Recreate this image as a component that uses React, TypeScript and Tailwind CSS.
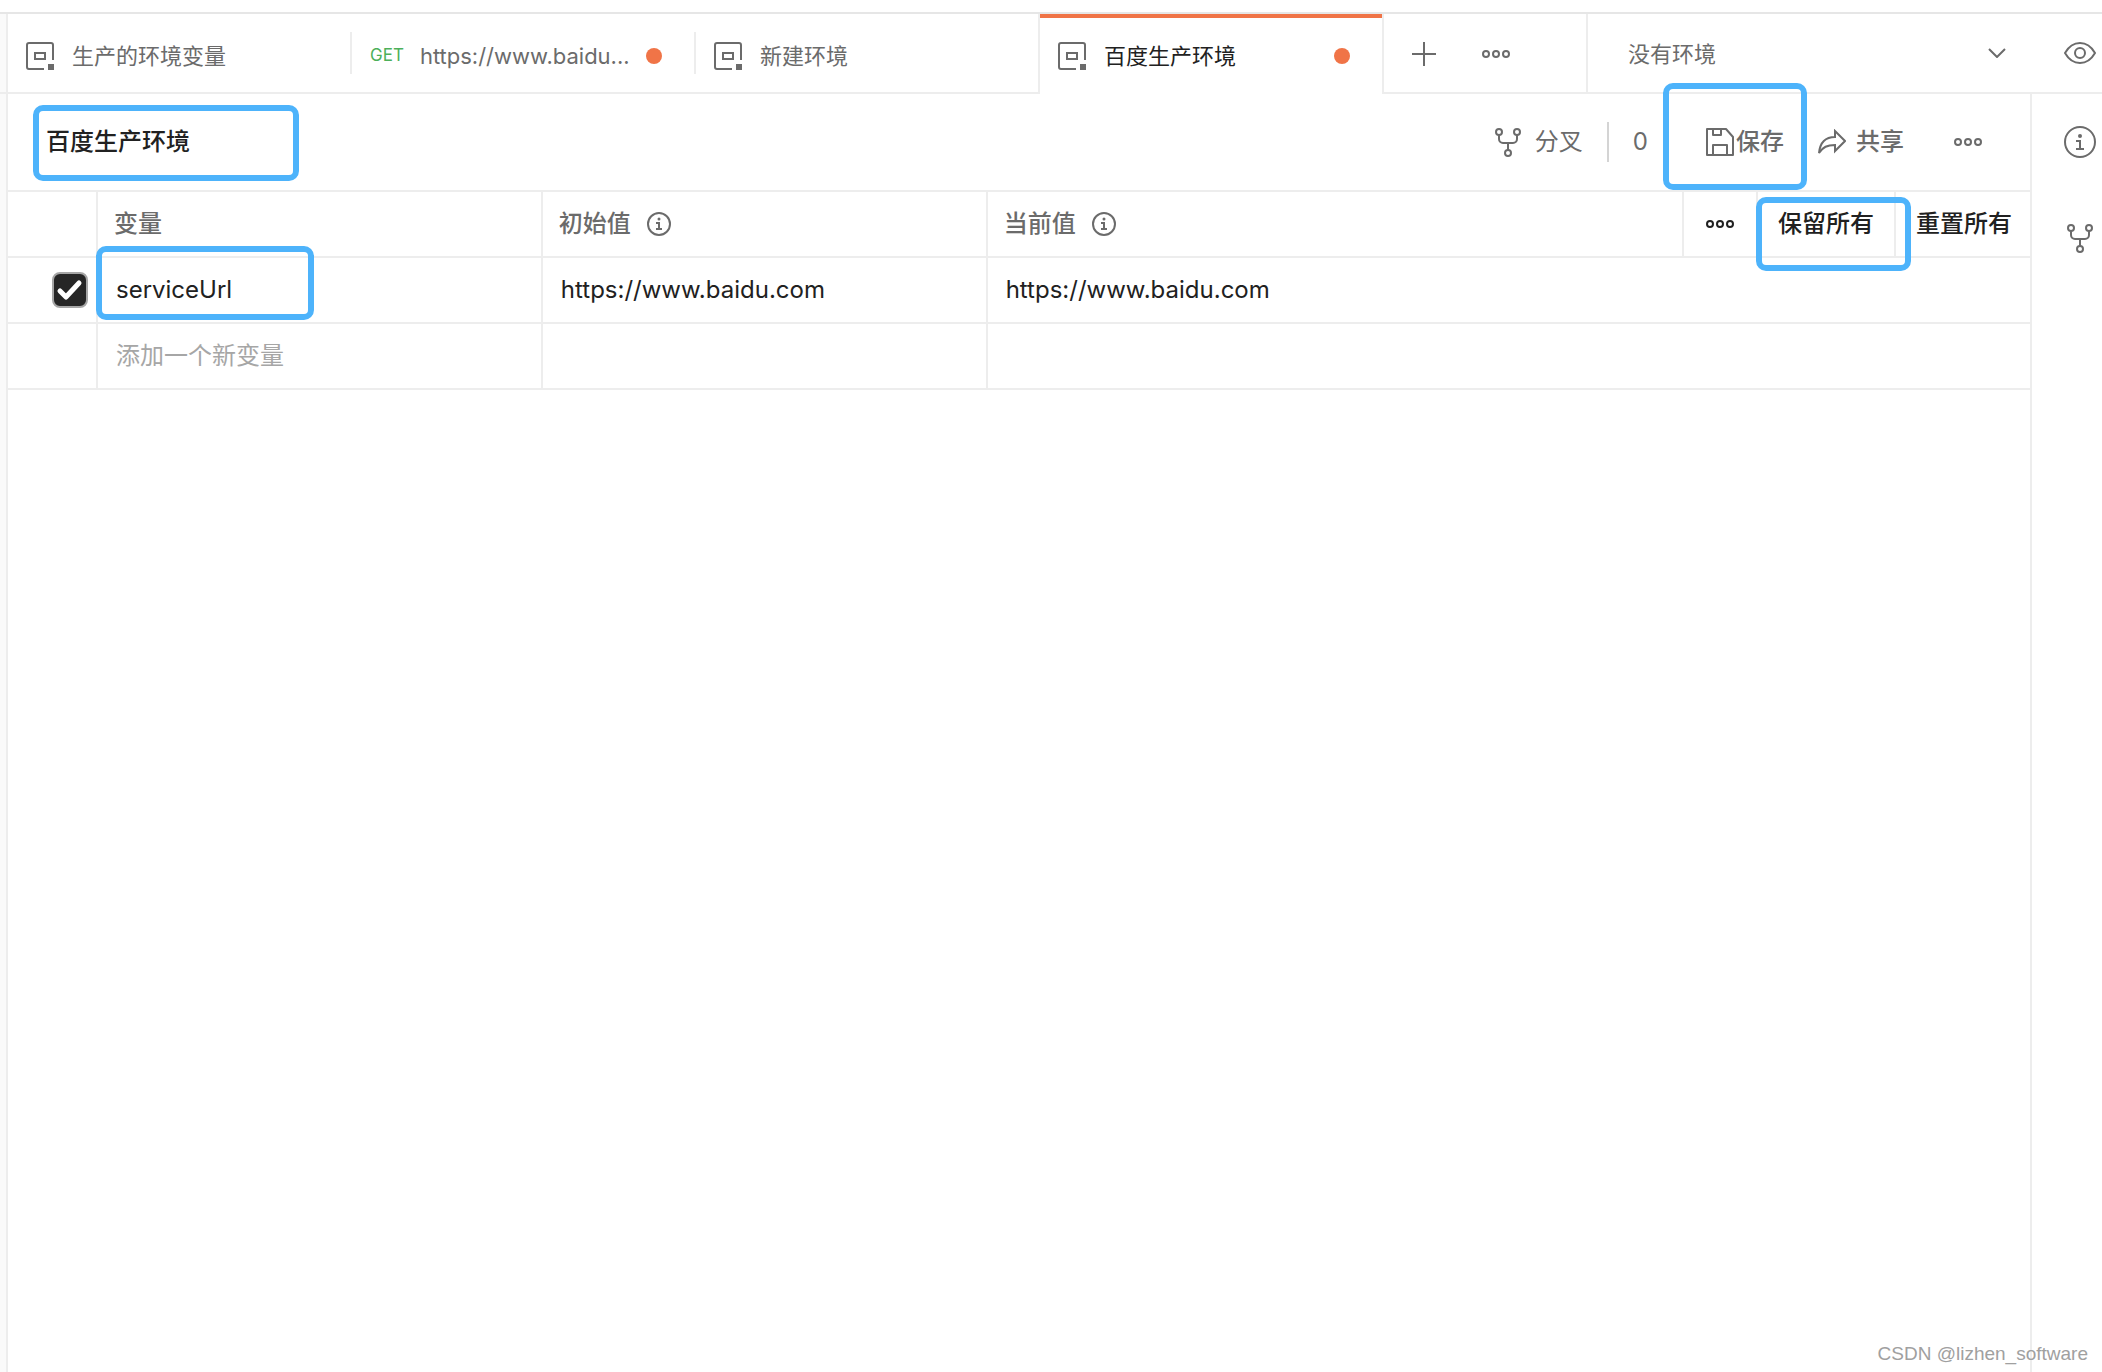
import React, { useState } from "react";
import type { ReactNode } from "react";

function EnvIcon() {
  return (
    <svg className="size-7 shrink-0 text-[#6b6b6b]" viewBox="0 0 28 28" fill="none" stroke="currentColor" strokeWidth="2" aria-hidden="true">
      <path d="M27 18V3a2 2 0 0 0-2-2H3a2 2 0 0 0-2 2v22a2 2 0 0 0 2 2h15" />
      <rect x="9" y="11" width="10" height="6" />
      <rect x="22" y="22" width="6" height="6" fill="currentColor" stroke="none" />
    </svg>
  );
}

function ForkIcon() {
  return (
    <svg className="h-[29px] w-[26px] shrink-0" viewBox="0 0 26 29" fill="none" stroke="currentColor" strokeWidth="2" aria-hidden="true">
      <circle cx="4" cy="4" r="3" />
      <circle cx="22" cy="4" r="3" />
      <circle cx="13" cy="25" r="3" />
      <path d="M4 7v4a4 4 0 0 0 4 4h10a4 4 0 0 0 4-4V7M13 15v7" />
    </svg>
  );
}

function DotsIcon() {
  return (
    <svg className="h-2 w-7 shrink-0" viewBox="0 0 28 8" fill="none" stroke="currentColor" strokeWidth="2" aria-hidden="true">
      <circle cx="4" cy="4" r="3" />
      <circle cx="14" cy="4" r="3" />
      <circle cx="24" cy="4" r="3" />
    </svg>
  );
}

function InfoIcon() {
  return (
    <svg className="size-8 shrink-0" viewBox="0 0 32 32" fill="none" stroke="currentColor" strokeWidth="2" aria-hidden="true">
      <circle cx="16" cy="16" r="15" />
      <path d="M12 15h4v8M12 23h8" />
      <circle cx="16" cy="10" r="2" fill="currentColor" stroke="none" />
    </svg>
  );
}

function SmallInfoIcon() {
  return (
    <svg className="size-6 shrink-0" viewBox="0 0 24 24" fill="none" stroke="currentColor" strokeWidth="2" aria-hidden="true">
      <circle cx="12" cy="12" r="11" />
      <path d="M9 11h3v6M9 17h6" />
      <circle cx="12" cy="7" r="1.5" fill="currentColor" stroke="none" />
    </svg>
  );
}

function SaveIcon() {
  return (
    <svg className="size-7 shrink-0" viewBox="0 0 28 28" fill="none" stroke="currentColor" strokeWidth="2" strokeLinejoin="round" aria-hidden="true">
      <path d="M1 1h19l7 8v18H1zM7 1v6h8V1M7 27V17h14v10" />
    </svg>
  );
}

function ShareIcon() {
  return (
    <svg className="h-[26px] w-7 shrink-0" viewBox="0 0 28 26" fill="none" stroke="currentColor" strokeWidth="2" aria-hidden="true">
      <path d="M17 2v6C7 8 2 14 1 24c4-6 8-8 16-8v6l10-10z" />
    </svg>
  );
}

function EyeIcon() {
  return (
    <svg className="h-[22px] w-8 shrink-0" viewBox="0 0 32 22" fill="none" stroke="currentColor" strokeWidth="2" aria-hidden="true">
      <path d="M1 11C5 4 10 1 16 1s11 3 15 10c-4 7-9 10-15 10S5 18 1 11z" />
      <circle cx="16" cy="11" r="5" />
    </svg>
  );
}

function Highlight({ className }: { className: string }) {
  return <span className={`pointer-events-none absolute z-10 rounded-[10px] border-6 border-[#4db3fb] ${className}`} />;
}

function Tab({ active, dirty, last, children }: { active?: boolean; dirty?: boolean; last?: boolean; children: ReactNode }) {
  return (
    <div className={`flex w-[344px] min-w-0 items-center ${active ? "text-[#212121]" : "border-b-2 border-[#ededed]"}`}>
      <button
        type="button"
        role="tab"
        aria-selected={!!active}
        className={`flex min-w-0 flex-1 items-center gap-4 self-stretch border-t-4 pl-[18px] pt-0.5 text-[22px] ${
          active ? "border-[#f07447] pb-0.5" : "border-transparent"
        }`}
      >
        {children}
        {dirty && <span className="mr-8 ml-auto size-4 shrink-0 rounded-full bg-[#f07447]" />}
      </button>
      <span className={`w-0.5 shrink-0 bg-[#ededed] ${active || last ? "self-stretch" : "h-[42px]"}`} />
    </div>
  );
}

const headCell = "h-[66px] border-b-2 border-r-2 border-[#ededed] p-0 text-left font-medium";
const bodyCell = "h-[66px] border-b-2 border-r-2 border-[#ededed] p-0";
const lastCell = "h-[66px] border-b-2 border-[#ededed] p-0";

function ValueInput({ label, value }: { label: string; value: string }) {
  const [text, setText] = useState(value);
  return (
    <input
      aria-label={label}
      className="h-full w-full bg-transparent px-[18px] pb-0.5 text-[24px] text-[#212121] outline-none placeholder:text-[#a6a6a6]"
      placeholder={label}
      value={text}
      onChange={(e) => setText(e.target.value)}
    />
  );
}

export default function App() {
  const [enabled, setEnabled] = useState(true);
  return (
    <div className="relative flex min-h-screen flex-col bg-white pt-3 font-['Inter','Noto_Sans_CJK_SC',sans-serif] text-[#6b6b6b]">
      <header className="flex h-[82px] border-t-2 border-[#e6e6e6]">
        <div className="w-2 shrink-0 border-r-2 border-b-2 border-[#ededed] bg-[#fafafa]" />
        <div role="tablist" className="flex min-w-0">
          <Tab>
            <EnvIcon />
            <span className="ml-0.5 truncate">生产的环境变量</span>
          </Tab>
          <Tab dirty>
            <span className="text-[17px] text-[#4cb05a]">GET</span>
            <span className="shrink-0">https://www.baidu...</span>
          </Tab>
          <Tab last>
            <EnvIcon />
            <span className="ml-0.5 truncate">新建环境</span>
          </Tab>
          <Tab active dirty>
            <EnvIcon />
            <span className="ml-0.5 truncate">百度生产环境</span>
          </Tab>
        </div>
        <div className="flex w-[204px] shrink-0 items-center gap-[46px] border-r-2 border-b-2 border-[#ededed] pt-0.5 pl-7">
          <button type="button" aria-label="新建标签">
            <svg className="size-6" viewBox="0 0 24 24" fill="none" stroke="currentColor" strokeWidth="2" aria-hidden="true">
              <path d="M12 0v24M0 12h24" />
            </svg>
          </button>
          <button type="button" aria-label="标签选项" className="flex">
            <DotsIcon />
          </button>
        </div>
        <div className="flex min-w-[300px] flex-1 items-center border-b-2 border-[#ededed] pr-1.5 pl-10">
          <div className="relative flex flex-1 items-center">
            <select aria-label="环境" className="w-full appearance-none bg-transparent pt-0.5 text-[22px] outline-none">
              <option>没有环境</option>
            </select>
            <svg className="pointer-events-none absolute right-0 h-2.5 w-[18px]" viewBox="0 0 18 10" fill="none" stroke="currentColor" strokeWidth="2" aria-hidden="true">
              <path d="M1 1l8 8 8-8" />
            </svg>
          </div>
          <button type="button" aria-label="查看环境" className="ml-[58px]">
            <EyeIcon />
          </button>
        </div>
      </header>

      <div className="flex flex-1">
        <div className="w-2 shrink-0 border-r-2 border-[#ededed] bg-[#fafafa]" />
        <main className="min-w-0 flex-1">
          <div className="flex h-24 items-center text-[24px]">
            <h1 className="relative ml-[38px] font-medium text-[#212121]">
              百度生产环境
              <Highlight className="-top-[19px] -left-[13px] h-[76px] w-[266px]" />
            </h1>
            <button type="button" className="ml-auto flex items-center gap-3.5">
              <ForkIcon />
              分叉
            </button>
            <span className="ml-6 h-10 w-0.5 bg-[#d4d4d4]" />
            <button type="button" className="ml-6">0</button>
            <button type="button" className="relative ml-[58px] flex items-center gap-0.5 font-medium">
              <SaveIcon />
              保存
              <Highlight className="-top-[41px] -left-[43px] h-[107px] w-36" />
            </button>
            <button type="button" className="ml-[34px] flex items-center gap-2.5 font-medium">
              <ShareIcon />
              共享
            </button>
            <button type="button" aria-label="更多操作" className="mr-12 ml-[50px] flex">
              <DotsIcon />
            </button>
          </div>

          <table className="w-full table-fixed border-separate border-spacing-0 border-t-2 border-[#ededed] text-[24px]">
            <colgroup>
              <col className="w-[90px]" />
              <col className="w-[22%]" />
              <col className="w-[22%]" />
              <col />
              <col className="w-[74px]" />
              <col className="w-[138px]" />
              <col className="w-[134px]" />
            </colgroup>
            <thead>
              <tr>
                <th className={headCell} />
                <th scope="col" className={headCell}>
                  <span className="pl-4">变量</span>
                </th>
                <th scope="col" className={headCell}>
                  <span className="flex items-center gap-4 pl-4">初始值 <SmallInfoIcon /></span>
                </th>
                <th scope="col" className={headCell}>
                  <span className="flex items-center gap-4 pl-4">当前值 <SmallInfoIcon /></span>
                </th>
                <th className={headCell}>
                  <button type="button" aria-label="列选项" className="mx-auto flex text-[#212121]">
                    <DotsIcon />
                  </button>
                </th>
                <th className={headCell}>
                  <button type="button" className="relative block w-full text-center font-medium text-[#212121]">
                    保留所有
                    <Highlight className="-top-[9px] -left-0.5 h-[74px] w-[155px]" />
                  </button>
                </th>
                <th className={lastCell}>
                  <button type="button" className="block w-full pl-0.5 text-center font-medium text-[#212121]">重置所有</button>
                </th>
              </tr>
            </thead>
            <tbody>
              <tr>
                <td className={bodyCell}>
                  <span className="relative ml-11 block size-9">
                    <input
                      type="checkbox"
                      aria-label="启用 serviceUrl"
                      checked={enabled}
                      onChange={(e) => setEnabled(e.target.checked)}
                      className="block size-9 appearance-none rounded-lg border-2 border-[#a6a6a6] checked:bg-[#262626]"
                    />
                    {enabled && (
                      <svg className="pointer-events-none absolute inset-0 size-9" viewBox="0 0 36 36" fill="none" stroke="#fff" strokeWidth="5" strokeLinecap="round" strokeLinejoin="round" aria-hidden="true">
                        <path d="M8 19l6 6L27 11" />
                      </svg>
                    )}
                  </span>
                </td>
                <td className={`${bodyCell} relative`}>
                  <ValueInput label="变量" value="serviceUrl" />
                  <Highlight className="-top-3 -left-0.5 h-[74px] w-[218px]" />
                </td>
                <td className={bodyCell}>
                  <ValueInput label="初始值" value="https://www.baidu.com" />
                </td>
                <td colSpan={4} className={lastCell}>
                  <ValueInput label="当前值" value="https://www.baidu.com" />
                </td>
              </tr>
              <tr>
                <td className={bodyCell} />
                <td className={bodyCell}>
                  <ValueInput label="添加一个新变量" value="" />
                </td>
                <td className={bodyCell} />
                <td colSpan={4} className={lastCell} />
              </tr>
            </tbody>
          </table>
        </main>
        <aside className="flex w-[72px] shrink-0 flex-col items-end border-l-2 border-[#ededed] pt-8 pr-1.5">
          <button type="button" aria-label="信息">
            <InfoIcon />
          </button>
          <button type="button" aria-label="分叉" className="mt-[66px] flex w-8 justify-center">
            <ForkIcon />
          </button>
        </aside>
      </div>
      <p className="absolute right-3.5 bottom-1 font-['Liberation_Sans',sans-serif] text-[19px] text-[#a0a0a0]">CSDN @lizhen_software</p>
    </div>
  );
}
